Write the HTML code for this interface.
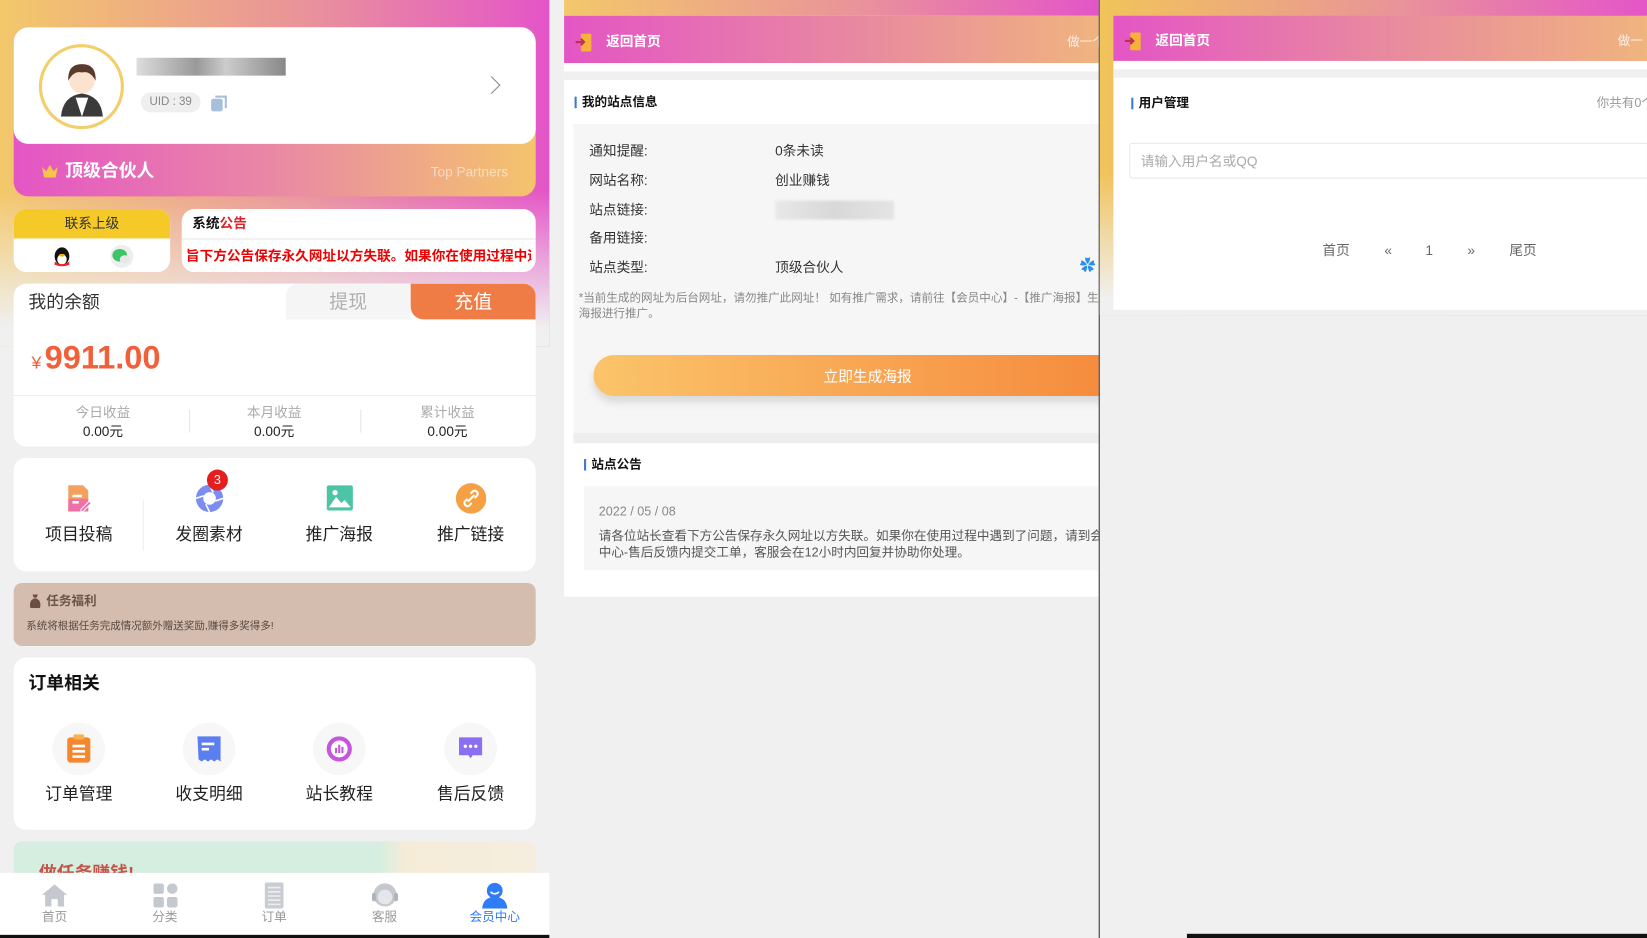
<!DOCTYPE html>
<html><head><meta charset="utf-8"><style>
*{margin:0;padding:0;box-sizing:border-box}
html,body{width:1647px;height:938px;overflow:hidden;background:#f0f0f0;font-family:"Liberation Sans","Noto Sans CJK SC",sans-serif}
#w{position:absolute;left:0;top:0;width:1568px;height:893px;transform:scale(1.05038,1.05039);transform-origin:0 0;background:#f0f0f0}
.a{position:absolute}
.t{position:absolute;white-space:nowrap;line-height:1}
.card{position:absolute;background:#fff;border-radius:12px}
</style></head><body><div id="w">

<!-- LEFT PANEL -->
<div class="a" style="left:0;top:0;width:523px;height:893px;background:#f0f0f0"></div>
<div class="a" style="left:0;top:0;width:523px;height:330px;background:linear-gradient(180deg,rgba(240,240,240,0) 55%,#f0f0f0 95%),linear-gradient(90deg,#f3c86a,#e9939a 55%,#e455c8);"></div>

<div class="card" style="left:13px;top:26px;width:497px;height:161px;border-radius:14px;background:linear-gradient(90deg,#e455c5,#ea8ea0 55%,#f4c46c)"></div>
<div class="card" style="left:13px;top:26px;width:497px;height:111px;border-radius:14px"></div>
<div class="a" style="left:37px;top:42px;width:81px;height:81px;border-radius:50%;border:3px solid #f2cf6a;background:#fff"></div>
<svg class="a" style="left:50px;top:55px" width="56" height="56" viewBox="0 0 56 56"><path d="M8 56 Q10 36 28 34 Q46 36 48 56Z" fill="#3a3a3a"/><path d="M22 38 L28 56 L34 38Z" fill="#fff"/><circle cx="28" cy="22" r="12" fill="#fde2cf"/><path d="M15 22 Q14 6 28 6 Q42 6 41 22 Q36 12 28 14 Q20 12 15 22Z" fill="#5a3a2a"/></svg>
<div class="a" style="left:130px;top:55px;width:142px;height:17px;background:linear-gradient(90deg,#ddd,#bbb,#999,#ccc,#aaa,#888)"></div>
<div class="t" style="left:134px;top:88px;width:57px;height:19px;border-radius:10px;background:#efefef;color:#888;font-size:11px;line-height:19px;text-align:center">UID : 39</div>
<div class="a" style="left:201px;top:94px;width:11px;height:12px;background:#a7bfdc;border-radius:2px"></div>
<div class="a" style="left:205px;top:91px;width:11px;height:12px;border:2px solid #a7bfdc;border-left:none;border-bottom:none"></div>
<div class="a" style="left:462px;top:75px;width:12px;height:12px;border-top:1.5px solid #888;border-right:1.5px solid #888;transform:rotate(45deg)"></div>
<svg class="a" style="left:39px;top:156px" width="17" height="14" viewBox="0 0 17 14"><path d="M1 3 L5 7 L8.5 1 L12 7 L16 3 L14 13 L3 13Z" fill="#f6c44a"/></svg>
<div class="t" style="left:62px;top:154px;font-size:17px;font-weight:bold;color:#fff">顶级合伙人</div>
<div class="t" style="left:410px;top:157px;font-size:13px;color:rgba(255,255,255,.55)">Top Partners</div>

<div class="card" style="left:13px;top:199px;width:149px;height:60px;overflow:hidden"><div class="t" style="left:0;top:0;width:149px;height:28px;background:#f5c928;font-size:13px;line-height:28px;text-align:center;color:#333">联系上级</div></div>
<svg class="a" style="left:49px;top:234px" width="20" height="21" viewBox="0 0 20 21"><ellipse cx="10" cy="10" rx="7" ry="8.5" fill="#111"/><ellipse cx="10" cy="13" rx="4.5" ry="5" fill="#fff"/><path d="M3 15 Q10 20 17 15 L17 18 Q10 21 3 18Z" fill="#e22"/><ellipse cx="10" cy="9" rx="3" ry="1.3" fill="#f5b400"/></svg>
<svg class="a" style="left:104px;top:233px" width="24" height="22" viewBox="0 0 24 22"><circle cx="12" cy="11" r="11" fill="#eee"/><ellipse cx="10" cy="10" rx="7" ry="6" fill="#3ec56a"/><ellipse cx="15" cy="14" rx="5" ry="4" fill="#e8e8e8"/></svg>
<div class="card" style="left:173px;top:199px;width:337px;height:60px;overflow:hidden"><div class="a" style="left:0;top:28px;width:337px;height:1px;background:#e6e6e6"></div></div>
<div class="t" style="left:183px;top:206px;font-size:13px;font-weight:bold;color:#111">系统<span style="color:#e2222a">公告</span></div>
<div class="a" style="left:175px;top:235px;width:331px;height:18px;overflow:hidden"><div class="t" style="left:2px;top:2px;font-size:13px;font-weight:bold;color:#e00">旨下方公告保存永久网址以方失联。如果你在使用过程中遇到了问题</div></div>

<div class="card" style="left:13px;top:270px;width:497px;height:155px;overflow:hidden">
<div class="a" style="left:259px;top:0;width:119px;height:34px;background:#f5f5f5;border-top-left-radius:12px"></div>
<div class="a" style="left:378px;top:0;width:119px;height:34px;background:#f07c45;border-bottom-left-radius:12px"></div>
<div class="t" style="left:259px;top:8px;width:119px;text-align:center;font-size:18px;color:#b0b0b0">提现</div>
<div class="t" style="left:378px;top:8px;width:119px;text-align:center;font-size:18px;color:#fff">充值</div>
<div class="a" style="left:0;top:106px;width:497px;height:1px;background:#eee"></div>
<div class="a" style="left:167px;top:120px;width:1px;height:22px;background:#e6e6e6"></div>
<div class="a" style="left:330px;top:120px;width:1px;height:22px;background:#e6e6e6"></div>
</div>
<div class="t" style="left:27px;top:279px;font-size:17px;color:#333">我的余额</div>
<div class="t" style="left:30px;top:325px;font-size:31px;font-weight:bold;color:#f0603a"><span style="font-size:17px;font-weight:normal;margin-right:3px">¥</span>9911.00</div>
<div class="t" style="left:48px;top:386px;width:100px;text-align:center;font-size:13px;color:#aaa">今日收益</div>
<div class="t" style="left:48px;top:404px;width:100px;text-align:center;font-size:13px;color:#222">0.00元</div>
<div class="t" style="left:211px;top:386px;width:100px;text-align:center;font-size:13px;color:#aaa">本月收益</div>
<div class="t" style="left:211px;top:404px;width:100px;text-align:center;font-size:13px;color:#222">0.00元</div>
<div class="t" style="left:376px;top:386px;width:100px;text-align:center;font-size:13px;color:#aaa">累计收益</div>
<div class="t" style="left:376px;top:404px;width:100px;text-align:center;font-size:13px;color:#222">0.00元</div>

<div class="card" style="left:13px;top:436px;width:497px;height:108px"><div class="a" style="left:123px;top:40px;width:1px;height:48px;background:#eee"></div></div>
<svg class="a" style="left:63px;top:461px" width="24" height="27" viewBox="0 0 24 27"><path d="M2 1h14l5 5v20H2Z" fill="#f4a15f"/><path d="M2 14h19v12H2Z" fill="#ef6fa7"/><rect x="6" y="10" width="9" height="2.4" fill="#fff"/><rect x="6" y="16" width="6" height="2.4" fill="#fff"/><path d="M14 24l8-8 2 2-8 8h-2Z" fill="#ef6fa7" stroke="#fff" stroke-width="1"/></svg>
<svg class="a" style="left:186px;top:461px" width="27" height="27" viewBox="0 0 27 27"><circle cx="13.5" cy="13.5" r="13" fill="#7b8ef0"/><circle cx="13.5" cy="13.5" r="6" fill="#fff"/><path d="M13.5 .5 L17 8 M26.5 13.5 L19 16 M13.5 26.5 L10 19 M.5 13.5 L8 11" stroke="#fff" stroke-width="1.5"/></svg>
<div class="t" style="left:197px;top:447px;width:20px;height:20px;border-radius:50%;background:#e41d1d;color:#fff;font-size:12px;line-height:20px;text-align:center">3</div>
<svg class="a" style="left:311px;top:462px" width="25" height="24" viewBox="0 0 25 24"><rect width="25" height="24" rx="2" fill="#4cc5a6"/><path d="M2 21 L9 11 L14 17 L17 14 L23 21Z" fill="#fff"/><circle cx="8" cy="7" r="2.5" fill="#fff"/></svg>
<svg class="a" style="left:434px;top:460px" width="29" height="29" viewBox="0 0 29 29"><circle cx="14.5" cy="14.5" r="14.5" fill="#f5a043"/><path d="M12 17l5-5M10.5 15.5l-2 2a3 3 0 004 4l2-2M18.5 13.5l2-2a3 3 0 00-4-4l-2 2" stroke="#fff" stroke-width="2" fill="none" stroke-linecap="round"/></svg>
<div class="t" style="left:25px;top:502px;width:100px;text-align:center;font-size:16px;color:#222">项目投稿</div>
<div class="t" style="left:149px;top:502px;width:100px;text-align:center;font-size:16px;color:#222">发圈素材</div>
<div class="t" style="left:273px;top:502px;width:100px;text-align:center;font-size:16px;color:#222">推广海报</div>
<div class="t" style="left:398px;top:502px;width:100px;text-align:center;font-size:16px;color:#222">推广链接</div>

<div class="card" style="left:13px;top:555px;width:497px;height:60px;background:#d4bcae;border-radius:8px"></div>
<svg class="a" style="left:27px;top:565px" width="13" height="14" viewBox="0 0 13 14"><path d="M4 1h5l-1 3h-3Z M2 14 Q0 6 6.5 4.5 Q13 6 11 14Z" fill="#6b4f42"/></svg>
<div class="t" style="left:44px;top:566px;font-size:12px;font-weight:bold;color:#6b5448">任务福利</div>
<div class="t" style="left:25px;top:592px;font-size:10px;color:#5a4a42">系统将根据任务完成情况额外赠送奖励,赚得多奖得多!</div>

<div class="card" style="left:13px;top:626px;width:497px;height:164px"></div>
<div class="t" style="left:27px;top:642px;font-size:17px;font-weight:bold;color:#111">订单相关</div>
<div class="a" style="left:50px;top:688px;width:50px;height:50px;border-radius:50%;background:#f7f7f7"></div>
<div class="a" style="left:174px;top:688px;width:50px;height:50px;border-radius:50%;background:#f7f7f7"></div>
<div class="a" style="left:298px;top:688px;width:50px;height:50px;border-radius:50%;background:#f7f7f7"></div>
<div class="a" style="left:423px;top:688px;width:50px;height:50px;border-radius:50%;background:#f7f7f7"></div>
<svg class="a" style="left:63px;top:699px" width="24" height="28" viewBox="0 0 24 28"><rect x="1" y="3" width="22" height="24" rx="3" fill="#f5872f"/><rect x="7" y="0" width="10" height="5" rx="1.5" fill="#f9b34e"/><rect x="6" y="10" width="12" height="2.5" fill="#fff"/><rect x="6" y="15" width="12" height="2.5" fill="#fff"/><rect x="6" y="20" width="12" height="2.5" fill="#fff"/></svg>
<svg class="a" style="left:187px;top:700px" width="24" height="26" viewBox="0 0 24 26"><path d="M1 1h22v24l-3-2-3 2-3-2-3 2-3-2-3 2-3-2Z" fill="#5b7ef0"/><rect x="5" y="7" width="12" height="2.5" fill="#fff"/><rect x="5" y="12" width="7" height="2.5" fill="#fff"/></svg>
<svg class="a" style="left:310px;top:700px" width="26" height="26" viewBox="0 0 26 26"><circle cx="13" cy="13" r="12" fill="#c455dd"/><circle cx="13" cy="13" r="8" fill="#fff"/><rect x="9" y="12" width="2" height="5" fill="#c455dd"/><rect x="12" y="9" width="2" height="8" fill="#c455dd"/><rect x="15" y="11" width="2" height="6" fill="#c455dd"/></svg>
<svg class="a" style="left:436px;top:701px" width="24" height="24" viewBox="0 0 24 24"><path d="M1 1h22v17H14l-2 3-2-3H1Z" fill="#8b6ff0"/><circle cx="7" cy="9.5" r="1.6" fill="#fff"/><circle cx="12" cy="9.5" r="1.6" fill="#fff"/><circle cx="17" cy="9.5" r="1.6" fill="#fff"/></svg>
<div class="t" style="left:25px;top:749px;width:100px;text-align:center;font-size:16px;color:#222">订单管理</div>
<div class="t" style="left:149px;top:749px;width:100px;text-align:center;font-size:16px;color:#222">收支明细</div>
<div class="t" style="left:273px;top:749px;width:100px;text-align:center;font-size:16px;color:#222">站长教程</div>
<div class="t" style="left:398px;top:749px;width:100px;text-align:center;font-size:16px;color:#222">售后反馈</div>

<div class="card" style="left:13px;top:801px;width:497px;height:40px;border-radius:8px 8px 0 0;background:linear-gradient(90deg,#d6eedf 70%,#f5ecd8 75%,#f5eedf)"></div>
<div class="t" style="left:37px;top:823px;font-size:17px;font-weight:bold;color:#c2554a">做任务赚钱!</div>

<div class="a" style="left:0;top:831px;width:523px;height:60px;background:#fff"></div>
<svg class="a" style="left:40px;top:842px" width="24" height="21" viewBox="0 0 24 21"><path d="M12 0 L24 10 L21 10 L21 21 L15 21 L15 14 L9 14 L9 21 L3 21 L3 10 L0 10Z" fill="#c4c9d0"/></svg>
<svg class="a" style="left:146px;top:841px" width="23" height="23" viewBox="0 0 23 23"><rect width="10" height="10" rx="2" fill="#c4c9d0"/><rect x="13" width="10" height="10" rx="5" fill="#c4c9d0"/><rect y="13" width="10" height="10" rx="2" fill="#c4c9d0"/><rect x="13" y="13" width="10" height="10" rx="2" fill="#c4c9d0"/></svg>
<svg class="a" style="left:252px;top:840px" width="18" height="25" viewBox="0 0 18 25"><rect width="18" height="25" rx="2" fill="#c9cdd3"/><path d="M3 5h12M3 9h12M3 13h12M3 17h12M3 21h12" stroke="#eee" stroke-width="1.5"/></svg>
<svg class="a" style="left:354px;top:840px" width="25" height="25" viewBox="0 0 25 25"><circle cx="12.5" cy="12" r="11" fill="#c4c9d0"/><circle cx="12.5" cy="14" r="7" fill="#e4e6ea"/><rect x="0" y="10" width="4" height="8" rx="2" fill="#b0b4ba"/><rect x="21" y="10" width="4" height="8" rx="2" fill="#b0b4ba"/></svg>
<svg class="a" style="left:459px;top:840px" width="24" height="25" viewBox="0 0 24 25"><circle cx="12" cy="8" r="7.5" fill="#2f7cf6"/><path d="M0 25 Q1 14 12 14 Q23 14 24 25Z" fill="#2f7cf6"/><path d="M8 9 Q12 13 16 9" stroke="#fff" stroke-width="1.5" fill="none"/></svg>
<div class="t" style="left:22px;top:867px;width:60px;text-align:center;font-size:12px;color:#999">首页</div>
<div class="t" style="left:127px;top:867px;width:60px;text-align:center;font-size:12px;color:#999">分类</div>
<div class="t" style="left:231px;top:867px;width:60px;text-align:center;font-size:12px;color:#999">订单</div>
<div class="t" style="left:336px;top:867px;width:60px;text-align:center;font-size:12px;color:#999">客服</div>
<div class="t" style="left:436px;top:867px;width:70px;text-align:center;font-size:12px;color:#2f7cf6">会员中心</div>
<div class="a" style="left:0;top:890px;width:523px;height:3px;background:#111"></div>

<!-- MIDDLE PANEL -->
<div class="a" style="left:537px;top:0;width:509px;height:893px;overflow:hidden">
<div class="a" style="left:0;top:0;width:509px;height:15px;background:linear-gradient(90deg,#f3c86a,#e9939a 55%,#e455c8)"></div>
<div class="a" style="left:0;top:15px;width:509px;height:45px;background:linear-gradient(90deg,#e455c5,#e889a0 55%,#f0b47e)"></div>
<svg class="a" style="left:11px;top:32px" width="16" height="17" viewBox="0 0 16 17"><rect x="5" y="0" width="10" height="17" rx="1" fill="#f5b13a"/><path d="M0 8h8M5 5l3 3-3 3" stroke="#c0304a" stroke-width="2" fill="none"/></svg>
<div class="t" style="left:40px;top:33px;font-size:13px;font-weight:bold;color:#fff">返回首页</div>
<div class="t" style="left:479px;top:34px;font-size:12px;color:rgba(255,255,255,.8)">做一个</div>
<div class="a" style="left:0;top:60px;width:509px;height:508px;background:#fff"></div>
<div class="a" style="left:0;top:68px;width:509px;height:8px;background:#f0f0f0"></div>
<div class="a" style="left:10px;top:92px;width:2px;height:11px;background:#3a7bd5"></div>
<div class="t" style="left:17px;top:91px;font-size:12px;font-weight:bold;color:#111">我的站点信息</div>
<div class="a" style="left:9px;top:118px;width:500px;height:294px;background:#f6f6f6"></div>
<div class="t" style="left:24px;top:137px;font-size:13px;color:#333">通知提醒:</div><div class="t" style="left:201px;top:137px;font-size:13px;color:#333">0条未读</div>
<div class="t" style="left:24px;top:165px;font-size:13px;color:#333">网站名称:</div><div class="t" style="left:201px;top:165px;font-size:13px;color:#333">创业赚钱</div>
<div class="t" style="left:24px;top:193px;font-size:13px;color:#333">站点链接:</div><div class="a" style="left:201px;top:191px;width:113px;height:18px;background:linear-gradient(90deg,#e8e8e8,#d8d8d8,#e4e4e4);filter:blur(1px)"></div>
<div class="t" style="left:24px;top:220px;font-size:13px;color:#333">备用链接:</div>
<div class="t" style="left:24px;top:248px;font-size:13px;color:#333">站点类型:</div><div class="t" style="left:201px;top:248px;font-size:13px;color:#333">顶级合伙人</div>
<div class="t" style="left:491px;top:246px;font-size:15px;color:#2f8fe6">✿</div>
<div class="t" style="left:14px;top:279px;font-size:11px;color:#888">*当前生成的网址为后台网址，请勿推广此网址！ 如有推广需求，请前往【会员中心】-【推广海报】生成</div>
<div class="t" style="left:14px;top:294px;font-size:11px;color:#888">海报进行推广。</div>
<div class="a" style="left:28px;top:338px;width:522px;height:39px;border-radius:20px;background:linear-gradient(90deg,#fbc46a,#f5873a);box-shadow:0 6px 8px rgba(0,0,0,.12)"></div>
<div class="t" style="left:28px;top:351px;width:522px;text-align:center;font-size:14px;color:#fff">立即生成海报</div>
<div class="a" style="left:9px;top:412px;width:500px;height:10px;background:#eeeeee"></div>
<div class="a" style="left:19px;top:437px;width:2px;height:11px;background:#3a7bd5"></div>
<div class="t" style="left:26px;top:436px;font-size:12px;font-weight:bold;color:#111">站点公告</div>
<div class="a" style="left:19px;top:463px;width:490px;height:80px;background:#f6f6f6"></div>
<div class="t" style="left:33px;top:481px;font-size:12px;color:#888">2022 / 05 / 08</div>
<div class="t" style="left:33px;top:504px;font-size:12px;color:#555">请各位站长查看下方公告保存永久网址以方失联。如果你在使用过程中遇到了问题，请到会员</div>
<div class="t" style="left:33px;top:520px;font-size:12px;color:#555">中心-售后反馈内提交工单，客服会在12小时内回复并协助你处理。</div>
</div>
<div class="a" style="left:1046px;top:0;width:1px;height:893px;background:#333"></div>

<!-- RIGHT PANEL -->
<div class="a" style="left:1047px;top:0;width:521px;height:300px;background:linear-gradient(180deg,rgba(240,240,240,0) 55%,#f0f0f0 95%),linear-gradient(90deg,#f1c45a,#e9939a 55%,#e455c8)"></div>
<div class="a" style="left:1060px;top:15px;width:508px;height:43px;background:linear-gradient(90deg,#e455c5,#e889a0 50%,#f0b47e)"></div>
<svg class="a" style="left:1071px;top:31px" width="16" height="17" viewBox="0 0 16 17"><rect x="5" y="0" width="10" height="17" rx="1" fill="#f5b13a"/><path d="M0 8h8M5 5l3 3-3 3" stroke="#c0304a" stroke-width="2" fill="none"/></svg>
<div class="t" style="left:1100px;top:32px;font-size:13px;font-weight:bold;color:#fff">返回首页</div>
<div class="t" style="left:1540px;top:33px;font-size:12px;color:rgba(255,255,255,.8)">做一</div>
<div class="a" style="left:1060px;top:58px;width:508px;height:237px;background:#fff"></div>
<div class="a" style="left:1060px;top:66px;width:508px;height:8px;background:#f0f0f0"></div>
<div class="a" style="left:1077px;top:93px;width:2px;height:11px;background:#3a7bd5"></div>
<div class="t" style="left:1084px;top:92px;font-size:12px;font-weight:bold;color:#111">用户管理</div>
<div class="t" style="left:1520px;top:92px;font-size:12px;color:#999">你共有0个</div>
<div class="a" style="left:1075px;top:136px;width:500px;height:34px;border:1px solid #e8e8e8;border-radius:3px"></div>
<div class="t" style="left:1086px;top:147px;font-size:13px;color:#aaa">请输入用户名或QQ</div>
<div class="t" style="left:1259px;top:232px;font-size:13px;color:#666">首页</div>
<div class="t" style="left:1318px;top:232px;font-size:13px;color:#666">«</div>
<div class="t" style="left:1357px;top:232px;font-size:13px;color:#666">1</div>
<div class="t" style="left:1397px;top:232px;font-size:13px;color:#666">»</div>
<div class="t" style="left:1437px;top:232px;font-size:13px;color:#666">尾页</div>
<div class="a" style="left:1130px;top:889px;width:438px;height:4px;background:#111"></div>
</div></body></html>
